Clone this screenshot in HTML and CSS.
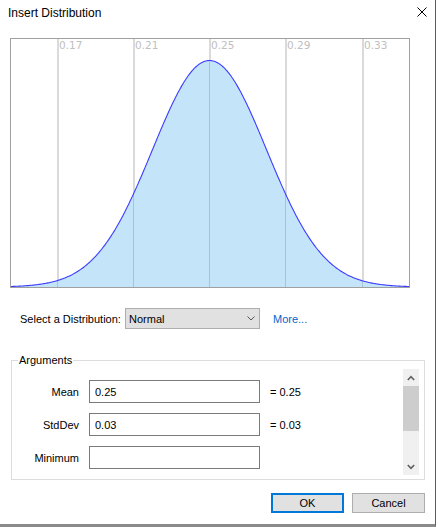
FILE: index.html
```html
<!DOCTYPE html>
<html lang="en">
<head>
    <meta charset="UTF-8">
    <title>Insert Distribution</title>
    <link rel="stylesheet" href="styles.css">
</head>
<body>
    <div class="dialog">
        <div class="titlebar">
            <span class="title">Insert Distribution</span>
            <svg class="close" width="10" height="10" viewBox="0 0 10 10">
                <path d="M0.5 0.5L9.5 9.5M9.5 0.5L0.5 9.5" stroke="#000" stroke-width="1" fill="none"/>
            </svg>
        </div>

        <svg class="chart" width="400" height="250" viewBox="0 0 400 250">
            <defs>
                <clipPath id="under"><path id="clipArea"/></clipPath>
            </defs>
            <g class="grid-light">
                <line x1="48" y1="0" x2="48" y2="250"/>
                <line x1="124" y1="0" x2="124" y2="250"/>
                <line x1="200" y1="0" x2="200" y2="250"/>
                <line x1="276" y1="0" x2="276" y2="250"/>
                <line x1="353" y1="0" x2="353" y2="250"/>
            </g>
            <path id="area" class="area"/>
            <g class="grid-fill" clip-path="url(#under)">
                <line x1="47.5" y1="0" x2="47.5" y2="250"/>
                <line x1="123.5" y1="0" x2="123.5" y2="250"/>
                <line x1="199.5" y1="0" x2="199.5" y2="250"/>
                <line x1="275.5" y1="0" x2="275.5" y2="250"/>
                <line x1="352.5" y1="0" x2="352.5" y2="250"/>
            </g>
            <path id="curve" class="curve"/>
            <rect class="frame" x="0.5" y="0.5" width="399" height="249"/>
            <g class="axis-labels">
                <text x="49" y="10.5">0.17</text>
                <text x="125" y="10.5">0.21</text>
                <text x="201" y="10.5">0.25</text>
                <text x="277" y="10.5">0.29</text>
                <text x="354" y="10.5">0.33</text>
            </g>
        </svg>

        <div class="select-row">
            <span class="select-label">Select a Distribution:</span>
            <div class="select">
                <span>Normal</span>
                <svg width="8" height="5" viewBox="0 0 8 5">
                    <path d="M0.5 0.5L4 4L7.5 0.5" stroke="#555" stroke-width="1" fill="none"/>
                </svg>
            </div>
            <a class="more" href="#">More...</a>
        </div>

        <fieldset class="args">
            <legend>Arguments</legend>
            <div class="args-body">
                <div class="rows">
                    <div class="row">
                        <label>Mean</label>
                        <input type="text" value="0.25">
                        <span class="result">= 0.25</span>
                    </div>
                    <div class="row">
                        <label>StdDev</label>
                        <input type="text" value="0.03">
                        <span class="result">= 0.03</span>
                    </div>
                    <div class="row">
                        <label>Minimum</label>
                        <input type="text" value="">
                    </div>
                </div>
                <div class="scrollbar">
                    <div class="sb-btn">
                        <svg width="8" height="6" viewBox="0 0 8 6"><path d="M0.8 5L4 1.6L7.2 5" stroke="#606060" stroke-width="1.6" fill="none"/></svg>
                    </div>
                    <div class="sb-thumb"></div>
                    <div class="sb-track"></div>
                    <div class="sb-btn">
                        <svg width="8" height="6" viewBox="0 0 8 6"><path d="M0.8 1L4 4.4L7.2 1" stroke="#606060" stroke-width="1.6" fill="none"/></svg>
                    </div>
                </div>
            </div>
        </fieldset>

        <div class="buttons">
            <button class="btn btn-default">OK</button>
            <button class="btn">Cancel</button>
        </div>
    </div>

    <script src="chart.js"></script>
</body>
</html>
```

FILE: styles.css
```css
* {
    margin: 0;
    padding: 0;
    box-sizing: border-box;
}

:root {
    --face: #e1e1e1;
    --face-border: #adadad;
    --accent: #0078d7;
    --link: #0066cc;
}

body {
    font-family: 'Liberation Sans', Arial, sans-serif;
    font-size: 11px;
    color: #000;
    background: #fff;
    width: 438px;
    height: 527px;
    overflow: hidden;
}

.dialog {
    width: 436px;
    height: 527px;
    background: #fff;
    border-right: 1px solid #5c5c5c;
    border-bottom: 3px solid #8a8a8a;
}

.titlebar {
    display: flex;
    height: 38px;
    padding: 5px 0 0 8px;
}

.title {
    font-size: 12px;
    line-height: 16px;
}

.close {
    margin-left: auto;
    margin-top: 2px;
    margin-right: 8px;
}

/* chart */
.chart {
    display: block;
    margin-left: 10px;
}

.grid-light line {
    stroke: #dadada;
    stroke-width: 2;
}

.grid-fill line {
    stroke: #a9c2d4;
    stroke-width: 1;
}

.area {
    fill: #c4e4fa;
}

.curve {
    fill: none;
    stroke: #3c3cff;
    stroke-width: 1.1;
}

.frame {
    fill: none;
    stroke: #a0a0a0;
    stroke-width: 1;
}

.axis-labels text {
    font-family: 'DejaVu Sans', Verdana, sans-serif;
    font-size: 10.5px;
    fill: #c0c0c0;
}

/* distribution picker */
.select-row {
    display: flex;
    align-items: center;
    height: 21px;
    margin-top: 20px;
    padding-left: 20px;
}

.select-label {
    width: 105px;
}

.select {
    width: 135px;
    height: 21px;
    display: flex;
    align-items: center;
    justify-content: space-between;
    padding: 0 4px 0 3px;
    background: var(--face);
    border: 1px solid var(--face-border);
}

.more {
    margin-left: 13px;
    color: var(--link);
    text-decoration: none;
}

/* arguments */
.args {
    width: 414px;
    margin: 23px 0 0 11px;
    padding: 1px 5px 4px 0;
    border: 1px solid #dcdcdc;
    min-width: 0;
}

.args legend {
    margin-left: 6px;
    padding: 0 1px;
    line-height: 16px;
}

.args-body {
    display: flex;
}

.rows {
    flex: 1;
    height: 106px;
    overflow: hidden;
    padding-top: 11px;
    display: flex;
    flex-direction: column;
    gap: 10px;
}

.row {
    display: flex;
    align-items: center;
    flex-shrink: 0;
}

.row label {
    width: 67px;
    margin-right: 10px;
    text-align: right;
}

.row input {
    width: 171px;
    height: 23px;
    padding: 0 5px;
    border: 1px solid #7a7a7a;
    font: inherit;
    color: #000;
    outline: none;
}

.result {
    margin-left: 10px;
}

.scrollbar {
    width: 16px;
    height: 106px;
    background: #f0f0f0;
    display: flex;
    flex-direction: column;
}

.sb-btn {
    height: 17px;
    display: flex;
    align-items: center;
    justify-content: center;
}

.sb-thumb {
    height: 45px;
    background: #cdcdcd;
}

.sb-track {
    flex: 1;
}

/* footer */
.buttons {
    display: flex;
    justify-content: flex-end;
    gap: 8px;
    margin-top: 13px;
    padding-right: 10px;
}

.btn {
    width: 73px;
    height: 20px;
    padding: 0;
    background: var(--face);
    border: 1px solid var(--face-border);
    font: inherit;
    color: #000;
}

.btn-default {
    border: 2px solid var(--accent);
}
```

FILE: chart.js
```js
// normal curve, mean 0.25 / sd 0.03 -> 57px per sd, centred on the 0.25 line
var pts = [];
for (var x = 0; x <= 400; x++) {
    var z = (x - 199.5) / 57;
    pts.push(x + ' ' + (249 - 226.5 * Math.exp(-z * z / 2)).toFixed(2));
}
var line = 'M' + pts.join(' L');
var area = 'M0 250 L' + pts.join(' L') + ' L400 250 Z';

document.getElementById('curve').setAttribute('d', line);
document.getElementById('area').setAttribute('d', area);
document.getElementById('clipArea').setAttribute('d', area);
```
